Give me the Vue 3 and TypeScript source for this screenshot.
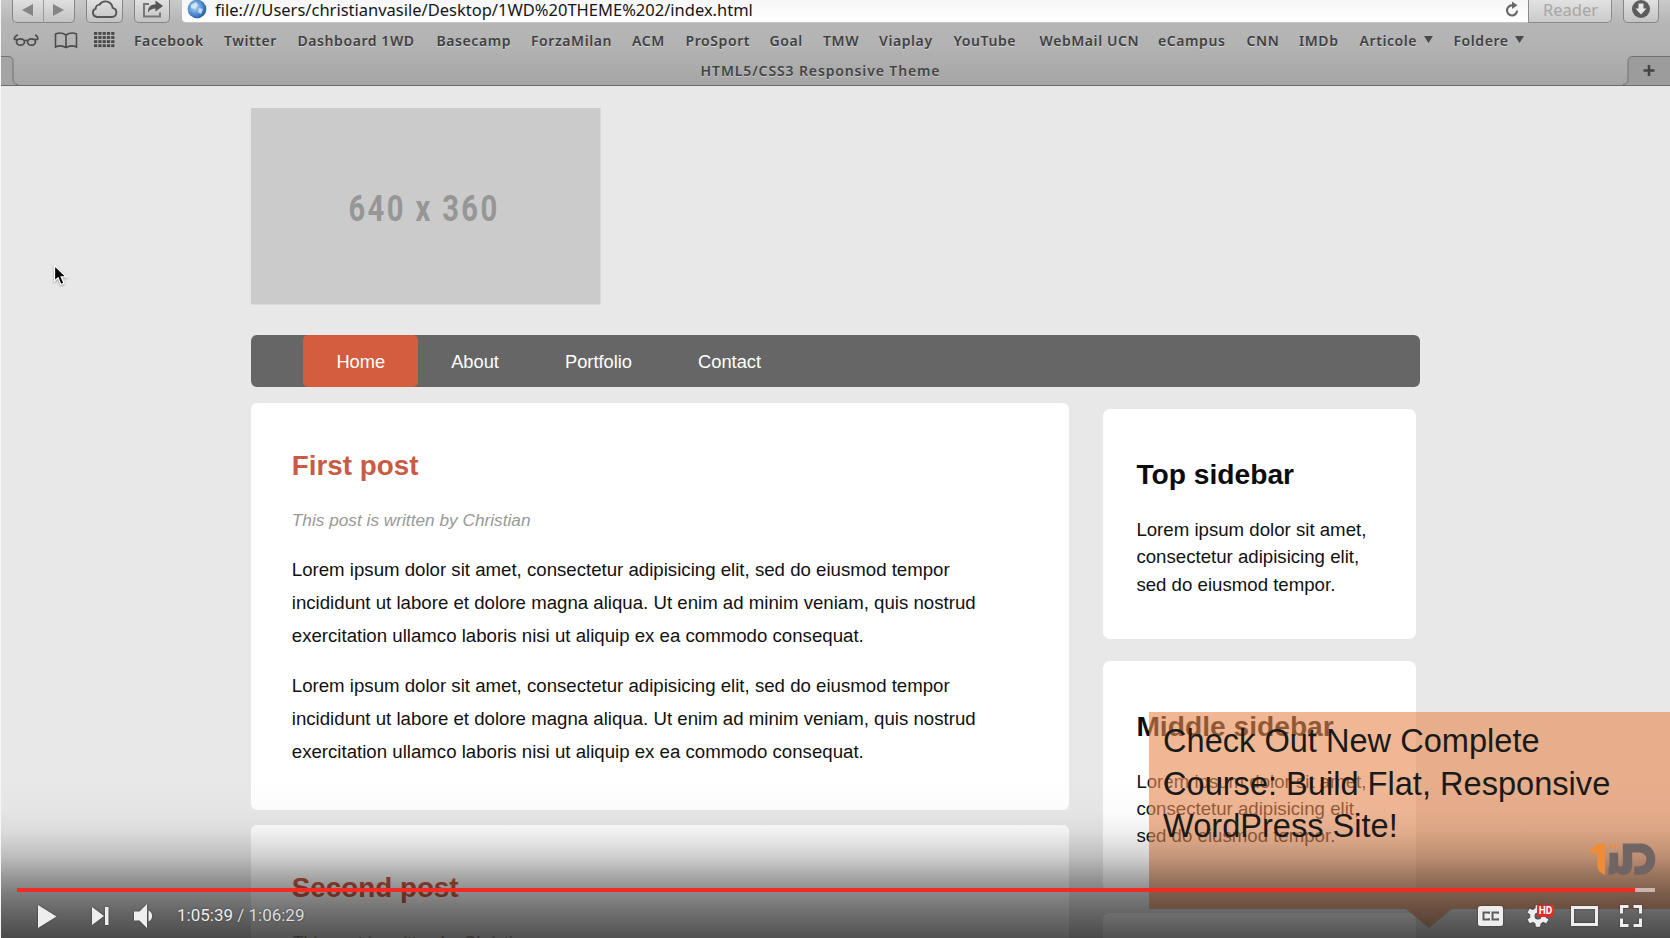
<script setup lang="ts">
interface Bookmark {
  label: string
  width: number
  menu?: boolean
}

const bookmarks: Bookmark[] = [
  { label: 'Facebook', width: 70 },
  { label: 'Twitter', width: 53.5 },
  { label: 'Dashboard 1WD', width: 119 },
  { label: 'Basecamp', width: 74.5 },
  { label: 'ForzaMilan', width: 81 },
  { label: 'ACM', width: 33.5 },
  { label: 'ProSport', width: 64 },
  { label: 'Goal', width: 33.5 },
  { label: 'TMW', width: 36 },
  { label: 'Viaplay', width: 54.5 },
  { label: 'YouTube', width: 66 },
  { label: 'WebMail UCN', width: 98.5 },
  { label: 'eCampus', width: 68.5 },
  { label: 'CNN', width: 32.5 },
  { label: 'IMDb', width: 40.5 },
  { label: 'Articole', width: 73, menu: true },
  { label: 'Foldere', width: 70, menu: true },
]

const navItems = ['Home', 'About', 'Portfolio', 'Contact']

const paragraph = [
  'Lorem ipsum dolor sit amet, consectetur adipisicing elit, sed do eiusmod tempor',
  'incididunt ut labore et dolore magna aliqua. Ut enim ad minim veniam, quis nostrud',
  'exercitation ullamco laboris nisi ut aliquip ex ea commodo consequat.',
].join('\n')

const posts = ['First post', 'Second post']
const widgets = ['Top sidebar', 'Middle sidebar', 'Bottom sidebar']
const widgetText = 'Lorem ipsum dolor sit amet,\nconsectetur adipisicing elit,\nsed do eiusmod tempor.'

const dots = Array.from({ length: 20 }, (_, i) => ({ x: (i % 5) * 4.3, y: Math.floor(i / 5) * 4.1 }))

const elapsed = '1:05:39'
const duration = '1:06:29'
const progress = (1618 / 1638) * 100
</script>

<template>
  <div class="player">
    <div class="screen">
      <header class="chrome">
        <div class="address-row">
          <div class="btn history">
            <svg width="63" height="23" viewBox="0 0 63 23">
              <path d="M21 4v12L10 10z M41 4v12l11-6z" fill="#858585" />
              <path d="M31.5 0v23" stroke="#999" />
            </svg>
          </div>
          <div class="btn cloud">
            <svg width="37" height="23" viewBox="0 0 37 23">
              <path d="M11 17h15a4.600 4.600 0 0 0 .6-9.100A7.200 7.200 0 0 0 13.500 4.600 4 4 0 0 0 9.700 8.700 4.300 4.300 0 0 0 11 17z" fill="none" stroke="#555" stroke-width="1.9" />
            </svg>
          </div>
          <div class="btn share">
            <svg width="36" height="23" viewBox="0 0 36 23">
              <path d="M15 4H10v12.500h16V12.500" fill="none" stroke="#777" stroke-width="2" />
              <path d="M14 12.500c0-5.500 2.500-8 7.500-8V0.500l7.500 5.500-7.500 5.500V8.500c-3.500 0-5.500 1-7.500 4z" fill="#555" />
            </svg>
          </div>
          <div class="url">
            <svg class="globe" width="20" height="20" viewBox="0 0 20 20">
              <defs>
                <radialGradient id="globe" cx="0.4" cy="0.4" r="0.65">
                  <stop offset="0" stop-color="#b4d7f4" />
                  <stop offset="0.6" stop-color="#4f8fd2" />
                  <stop offset="1" stop-color="#24529a" />
                </radialGradient>
              </defs>
              <circle cx="10" cy="10" r="9.300" fill="url(#globe)" />
              <path d="M4 6l5-3 2 3-3 4-4-1zM12 9l4 1-2 5-3-2z" fill="#e3f2fc" opacity="0.75" />
            </svg>
            <span class="url-text">file:///Users/christianvasile/Desktop/1WD%20THEME%202/index.html</span>
            <svg class="reload" width="16" height="18" viewBox="0 0 16 18">
              <path d="M13 10.500A5 5 0 1 1 8.500 5.500" fill="none" stroke="#6a6a6a" stroke-width="2.200" />
              <path d="M8 1.500l5.500 3.800L8 9z" fill="#6a6a6a" />
            </svg>
          </div>
          <div class="reader">Reader</div>
          <div class="btn download">
            <svg width="36" height="23" viewBox="0 0 36 23">
              <circle cx="18" cy="9" r="9" fill="#5c5c5c" />
              <path d="M15.500 3.500h5v5h3l-5.500 6-5.500-6h3z" fill="#e6e6e6" />
            </svg>
          </div>
        </div>

        <div class="bookmarks">
          <svg class="glasses" width="26" height="14" viewBox="0 0 26 14" fill="none" stroke="#4c4c4c" stroke-width="1.700">
            <ellipse cx="7.500" cy="9" rx="4" ry="3.200" />
            <ellipse cx="18.500" cy="9" rx="4" ry="3.200" />
            <path d="M11 8q2-1.500 4 0M1 6.500h4M25 6.500h-4M1 6.500q1-4 4-4.500M25 6.500q-.5-4-3-4.500" />
          </svg>
          <svg class="book" width="24" height="17" viewBox="0 0 24 17" fill="none" stroke="#4c4c4c" stroke-width="1.600">
            <path d="M12 3Q7-.5 1.500 2v13Q7 12.500 12 15.500 17 12.500 22.500 15V2Q17-.5 12 3zv12.500" />
          </svg>
          <svg class="dots" width="21" height="16" viewBox="0 0 21 16" fill="#484848">
            <rect v-for="(d, i) in dots" :key="i" :x="d.x" :y="d.y" width="3.200" height="2.800" />
          </svg>
          <nav class="links">
            <span v-for="b in bookmarks" :key="b.label" class="link" :style="{ width: b.width + 'px' }">
              {{ b.label }}<svg v-if="b.menu" width="9" height="7" viewBox="0 0 9 7"><path d="M0 0h9L4.500 7z" fill="#4a4a4a" /></svg>
            </span>
          </nav>
        </div>

        <div class="tabs">
          <svg class="tab-prev" width="17" height="29" viewBox="0 0 17 29">
            <path d="M0 .5h7q5 0 5 5V23q0 5.500 5 5.500H0z" fill="#a4a4a4" />
            <path d="M0 .5h7q5 0 5 5V23q0 5.500 5 5.500" fill="none" stroke="#717171" />
          </svg>
          <div class="tab-title">HTML5/CSS3 Responsive Theme</div>
          <svg class="tab-new" width="47" height="29" viewBox="0 0 47 29">
            <path d="M47 .5H10q-5 0-5 5V23q0 5.500-5 5.500h47z" fill="#9c9c9c" />
            <path d="M47 .5H10q-5 0-5 5V23q0 5.500-5 5.500" fill="none" stroke="#717171" />
            <path d="M26 9v11M20.500 14.500h11" stroke="#444" stroke-width="2.600" />
          </svg>
        </div>
      </header>

      <div class="page">
        <svg class="placeholder" viewBox="0 0 349.500 196.500">
          <rect width="349.500" height="196.500" fill="#cbcbcb" />
          <text x="97.500" y="113" textLength="151" lengthAdjust="spacingAndGlyphs">640 x 360</text>
        </svg>
        <nav class="menu">
          <a v-for="(n, i) in navItems" :key="n" :class="{ active: i === 0 }">{{ n }}</a>
        </nav>
        <div class="columns">
          <main class="posts">
            <article v-for="p in posts" :key="p" class="post">
              <h2>{{ p }}</h2>
              <p class="meta">This post is written by Christian</p>
              <p>{{ paragraph }}</p>
              <p>{{ paragraph }}</p>
            </article>
          </main>
          <aside class="sidebar">
            <section v-for="w in widgets" :key="w" class="widget">
              <h2>{{ w }}</h2>
              <p>{{ widgetText }}</p>
            </section>
          </aside>
        </div>
      </div>
    </div>

    <svg class="cursor" width="17" height="24" viewBox="0 0 17 24">
      <path d="M1.500 1.500v15.500l3.600-3.200 2.700 6.700 3.200-1.300-2.800-6.400h5z" fill="#000" stroke="#fff" stroke-width="1.300" />
    </svg>

    <svg class="note-shape" width="521" height="216" viewBox="0 0 521 216">
      <path d="M0 0H521V197H303L280 216 257 197H0z" fill="rgba(230,137,82,0.61)" />
    </svg>

    <div class="shade"></div>
    <svg class="brand" width="66" height="33" viewBox="570 38 197 98">
      <path d="M570 62L592 39H615V133Q592 124 592 104V69H570z" fill="#ef8c37" />
      <text x="627" y="52" textLength="28" lengthAdjust="spacingAndGlyphs">ST</text>
      <path d="M628 67h26v34c0 5 3 7 7 7s7-2 7-7V39h54a43 47 0 0 1 0 94h-20v-26h16a20 20 0 0 0 0-41h-22v37c0 20-10 30-27 30-9 0-14-2-20-8-5 5-13 8-24 8v-23q3 0 3-8z" fill="#706562" />
    </svg>
    <div class="note-text">Check Out New Complete<br />Course: Build Flat, Responsive<br />WordPress Site!</div>

    <div class="controls">
      <div class="track"><div class="played" :style="{ width: progress + '%' }"></div></div>
      <div class="bar">
        <svg class="play" width="19" height="23" viewBox="0 0 19 23"><path d="M0 0l18.500 11.500L0 23z" /></svg>
        <svg class="next" width="17" height="18" viewBox="0 0 17 18"><path d="M0 0l12 9-12 9zM13 0h3.500v18H13z" /></svg>
        <svg class="volume" width="20" height="24" viewBox="0 0 20 24"><path d="M0 7.500h5.500L13 0v24l-7.500-7.500H0zM14.500 6.500a6 6 0 0 1 0 11z" /></svg>
        <div class="time">{{ elapsed }}<span> / {{ duration }}</span></div>
        <div class="right">
          <div class="cc">
            <svg width="25" height="20" viewBox="0 0 25 20">
              <rect width="25" height="20" rx="2.500" />
              <path d="M11 7.800V6.500H5.500v7H11v-1.300M20 7.800V6.500h-5.500v7H20v-1.300" fill="none" stroke="#5c5c5c" stroke-width="2" />
            </svg>
          </div>
          <div class="gear">
            <svg width="22" height="22" viewBox="0 0 22 22">
              <circle cx="11" cy="11" r="5.700" fill="none" stroke="#eee" stroke-width="4.400" />
              <path v-for="a in [0, 60, 120, 180, 240, 300]" :key="a" d="M8.300 4l.6-3.800h4.200l.6 3.800z" :transform="`rotate(${a} 11 11)`" />
            </svg>
            <span class="hd">HD</span>
          </div>
          <svg class="theater" width="27" height="20" viewBox="0 0 27 20"><path d="M1.500 1.500h24v17h-24z" fill="none" stroke="#eee" stroke-width="3" /></svg>
          <svg class="full" width="22" height="22" viewBox="0 0 22 22">
            <path d="M1.500 8.500v-7h7M13.500 1.500h7v7M20.500 13.500v7h-7M8.500 20.500h-7v-7" fill="none" stroke="#eee" stroke-width="3" />
          </svg>
        </div>
      </div>
    </div>
  </div>
</template>

<style>
html,
body {
  margin: 0;
  overflow: hidden;
}
</style>

<style scoped>
.player {
  position: relative;
  width: 1670px;
  height: 938px;
  overflow: hidden;
  box-sizing: border-box;
  border-left: 1px solid #f6f6f6;
  background: #e8e8e8;
  font-family: "Liberation Sans", Arial, sans-serif;
}
svg {
  display: block;
  flex: none;
}
.screen {
  height: 938px;
  overflow: hidden;
}

.chrome {
  height: 86px;
  box-sizing: border-box;
  border-bottom: 1px solid #6b6b6b;
  background: linear-gradient(#c9c9c9 0, #b6b6b6 22px, #b3b3b3 45px, #a5a5a5 85px);
  font-family: "Noto Sans", "Open Sans", sans-serif;
}
.address-row {
  display: flex;
  height: 24px;
  padding-left: 11px;
}
.btn {
  box-sizing: border-box;
  height: 23px;
  border: 1px solid #858585;
  border-top: 0;
  border-radius: 0 0 5px 5px;
  background: linear-gradient(#e0e0e0, #c3c3c3);
}
.btn svg {
  margin-left: -1px;
}
.history { width: 63px; }
.cloud { width: 37px; margin-left: 11px; }
.share { width: 36px; margin-left: 11px; }
.url {
  display: flex;
  width: 1346px;
  height: 22px;
  margin-left: 12px;
  border-radius: 0 0 0 4px;
  background: linear-gradient(#f6f6f6, #fff);
  box-shadow: 0 1px 0 #c4c4c4;
}
.globe { margin: -1px 0 0 5px; }
.url-text {
  margin-left: 8px;
  font-size: 16.5px;
  line-height: 20px;
  color: #161616;
  white-space: nowrap;
}
.reload { margin: 0 8px 0 auto; }
.reader {
  box-sizing: border-box;
  width: 84px;
  height: 23px;
  padding-left: 14px;
  border: 1px solid #8c8c8c;
  border-top: 0;
  border-radius: 0 0 5px 0;
  background: linear-gradient(#e2e2e2, #cacaca);
  color: #a6a6a6;
  font-size: 16.5px;
  line-height: 19px;
}
.download { width: 36px; margin-left: 11px; }

.bookmarks {
  display: flex;
  height: 32px;
}
.glasses { margin: 9px 0 0 12px; }
.book { margin: 8px 0 0 15px; }
.dots { margin: 8px 0 0 16px; }
.links {
  display: flex;
  gap: 20px;
  margin-left: 19px;
}
.link {
  display: flex;
  flex: none;
  align-items: flex-start;
  justify-content: space-between;
  color: #414141;
  font-size: 14px;
  font-weight: 600;
  letter-spacing: 0.58px;
  line-height: 33px;
  white-space: nowrap;
  text-shadow: 0 1px 0 rgba(255, 255, 255, 0.45);
}
.link:nth-last-child(2) { margin-right: 1px; }
.link svg { margin-top: 12px; }

.tabs {
  display: flex;
  height: 29px;
}
.tab-title {
  flex: 1;
  color: #444;
  font-size: 14px;
  font-weight: 600;
  letter-spacing: 0.87px;
  line-height: 29px;
  text-align: center;
  text-shadow: 0 1px 0 rgba(255, 255, 255, 0.4);
}

.page {
  width: 1168.5px;
  height: 852px;
  margin-left: 250.4px;
  padding-top: 22.3px;
  box-sizing: border-box;
}
.placeholder {
  width: 349.5px;
  height: 196.5px;
}
.placeholder text {
  font: 700 37px Roboto, sans-serif;
  letter-spacing: 3px;
  fill: #969696;
}
.menu {
  display: flex;
  height: 52px;
  margin-top: 30.4px;
  padding-left: 52px;
  box-sizing: border-box;
  border-radius: 6px;
  background: #666;
}
.menu a {
  padding: 0 33px;
  border-radius: 5px;
  color: #fff;
  font-size: 18.3px;
  line-height: 53px;
}
.menu .active { background: #d35d3e; }

.columns {
  display: flex;
  align-items: flex-start;
  margin-top: 15.8px;
}
h2 {
  margin: 0;
  font-size: 28.2px;
  line-height: 32px;
}
p {
  margin: 0;
  color: #111;
  font-size: 18.65px;
  white-space: pre;
}
.posts { width: 817.5px; }
.post {
  height: 407px;
  margin-bottom: 15.5px;
  padding: 46.600px 40.400px 0;
  box-sizing: border-box;
  border-radius: 6px;
  background: #fff;
}
.post h2 {
  color: #c95b44;
  font-size: 27.8px;
}
.post p {
  margin-bottom: 18.2px;
  line-height: 32.6px;
}
.post .meta {
  margin: 28px 0 24.8px;
  color: #999;
  font-size: 17.25px;
  font-style: italic;
  line-height: 20px;
}
.sidebar {
  width: 313px;
  margin: 6.500px 0 0 34px;
}
.widget {
  height: 229.5px;
  margin-bottom: 22.200px;
  padding: 48.500px 33.5px 0;
  box-sizing: border-box;
  border-radius: 7px;
  background: #fff;
}
.widget h2 { color: #0c0c0c; }
.widget p {
  margin-top: 25.900px;
  line-height: 27.35px;
}

.cursor {
  position: absolute;
  left: 52px;
  top: 263.5px;
  filter: drop-shadow(0 1px 1px rgba(0, 0, 0, 0.35));
}
.note-shape {
  position: absolute;
  left: 1148px;
  top: 712px;
}
.brand {
  position: absolute;
  left: 1589px;
  top: 842.5px;
}
.brand text {
  font: 700 17px "Liberation Sans", sans-serif;
  fill: #ef8c37;
}
.shade {
  position: absolute;
  inset: 780px 0 0 0;
  background: linear-gradient(
    rgba(0, 0, 0, 0) 0,
    rgba(0, 0, 0, 0.015) 32px,
    rgba(0, 0, 0, 0.06) 52px,
    rgba(0, 0, 0, 0.18) 76px,
    rgba(0, 0, 0, 0.35) 97px,
    rgba(0, 0, 0, 0.47) 114px,
    rgba(0, 0, 0, 0.58) 136px,
    rgba(0, 0, 0, 0.68) 158px
  );
}
.note-text {
  position: absolute;
  left: 1162px;
  top: 720px;
  color: #1a1a1a;
  font-size: 32.6px;
  line-height: 42.5px;
  white-space: nowrap;
}

.controls {
  position: absolute;
  inset: 888px 15px 0 16px;
}
.track {
  height: 4px;
  background: rgba(255, 255, 255, 0.55);
}
.played {
  height: 4px;
  background: #f12b24;
}
.bar {
  display: flex;
  align-items: center;
  height: 46px;
  padding: 1px 13px 0 21px;
  color: #eee;
  fill: #eee;
}
.bar svg { filter: drop-shadow(0 0 1px rgba(0, 0, 0, 0.4)); }
.next { margin-left: 35px; }
.volume { margin-left: 25px; }
.time {
  margin: -2px 0 0 23px;
  font: 17px/20px Roboto, sans-serif;
  white-space: pre;
  text-shadow: 0 0 2px rgba(0, 0, 0, 0.5);
}
.time span { color: #ddd; }
.right {
  display: flex;
  align-items: center;
  margin-left: auto;
}
.gear {
  position: relative;
  margin-left: 24px;
}
.hd {
  position: absolute;
  left: 10px;
  top: 0;
  width: 17px;
  height: 12px;
  border-radius: 1px;
  background: #e6282b;
  color: #fff;
  font: 700 10px/12px Roboto, sans-serif;
  text-align: center;
}
.theater { margin-left: 22px; }
.full { margin-left: 22px; }
</style>
